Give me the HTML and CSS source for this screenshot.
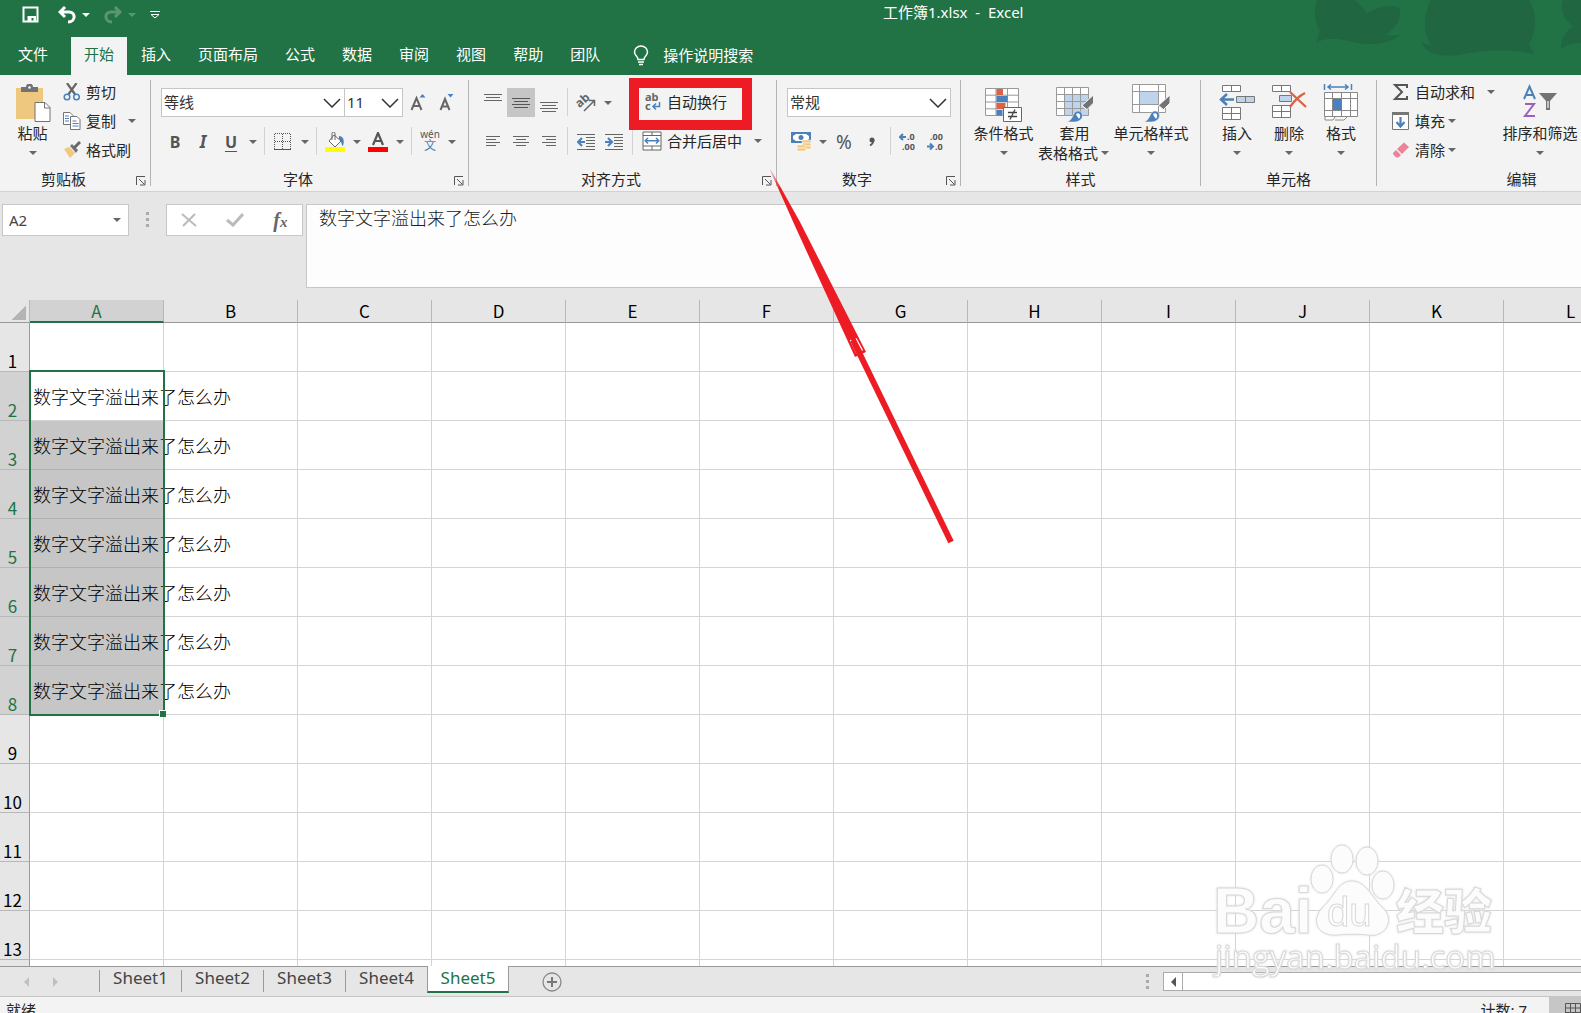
FILE: index.html
```html
<!DOCTYPE html>
<html lang="zh-CN">
<head>
    <meta charset="UTF-8">
    <title>工作簿1.xlsx - Excel</title>
    <meta name="viewport" content="width=device-width, initial-scale=1.0">
    <link rel="stylesheet" href="styles.css">
</head>
<body>
<header class="header">
    <svg class="clouds" width="270" height="75" viewBox="0 0 270 75">
        <path d="M6 0C2 12 4 24 9 30L5 43C16 36 30 39 42 42C58 46 78 44 90 35C84 36 78 36 74 35C86 29 93 14 87 7C78 4 64 8 56 13C52 8 48 4 44 0Z"/>
        <path d="M120 0C112 14 112 34 120 45L110 43C116 54 128 57 148 55C170 51 194 48 223 54L218 45C226 30 226 12 218 0Z"/>
        <path d="M252 0C248 12 254 20 262 26C255 31 250 38 250 49C256 44 262 43 270 43V0Z"/>
    </svg>
    <div class="title-bar">
        <div class="quick">
            <button class="quick-btn" aria-label="保存"><svg width="18" height="18" viewBox="0 0 18 18"><path d="M1.500 1.500h14v14h-14z" fill="none" stroke="#fff" stroke-width="2"/><path d="M3 10h11v5.500H11.500V12H9.500v3.500H5.500V10H3z" fill="#fff"/></svg></button>
            <button class="quick-btn" aria-label="撤消"><svg width="18" height="18" viewBox="0 0 18 18"><path d="M7 1L2 6l5 5M2 6h9c7 0 7 10-1 10" fill="none" stroke="#fff" stroke-width="3"/></svg><span class="caret"></span></button>
            <button class="quick-btn dim" aria-label="恢复"><svg width="18" height="18" viewBox="0 0 18 18"><path d="M11 1l5 5-5 5M16 6H7C0 6 0 16 8 16" fill="none" stroke="#fff" stroke-width="3"/></svg><span class="caret"></span></button>
            <button class="quick-btn" aria-label="自定义快速访问工具栏"><svg width="10" height="8" viewBox="0 0 10 8"><path d="M0 .5h10M1 3.500l4 3.500 4-3.500z" fill="none" stroke="#fff"/></svg></button>
        </div>
        <div class="title">工作簿1.xlsx&nbsp; -&nbsp; Excel</div>
    </div>
    <nav class="tabs">
        <button class="tab file">文件</button>
        <button class="tab active">开始</button>
        <button class="tab">插入</button>
        <button class="tab">页面布局</button>
        <button class="tab">公式</button>
        <button class="tab">数据</button>
        <button class="tab">审阅</button>
        <button class="tab">视图</button>
        <button class="tab">帮助</button>
        <button class="tab">团队</button>
        <button class="tab tell-me"><svg width="16" height="21" viewBox="0 0 16 21"><path d="M5 14.500C5 11 1.500 11 1.500 7a6.500 6 0 0 1 13 0c0 4-3.500 4-3.500 7.500zM5 17h6M6 19.500h4" fill="none" stroke="#fff" stroke-width="1.500"/></svg>操作说明搜索</button>
    </nav>
</header>

<div class="ribbon">
    <section class="group clipboard">
        <div class="group-body">
            <button class="big">
                <svg width="36" height="39" viewBox="0 0 36 39"><path d="M1 4h27v31H1z" fill="#eec87e"/><path d="M6 3h5a3.500 3.500 0 0 1 7 0h5v5H6z" fill="#737373"/><circle cx="14.500" cy="3.500" r="1.200" fill="#fff"/><path d="M20 18.500h10l5 5v14H20z" fill="#fff" stroke="#737373"/><path d="M29.500 18.500v5.500H35" fill="none" stroke="#737373"/></svg>
                <span>粘贴</span><span class="caret"></span>
            </button>
            <div class="list">
                <button class="item"><svg width="18" height="18" viewBox="0 0 18 18"><path d="M4 0l8.500 12M13.500 0L5 12" stroke="#666" stroke-width="2.200"/><g fill="#f3f3f3" stroke="#4a80bb" stroke-width="1.500"><circle cx="4" cy="14" r="2.800"/><circle cx="13.500" cy="14" r="2.800"/></g></svg>剪切</button>
                <button class="item"><svg width="18" height="18" viewBox="0 0 18 18"><g fill="#fff" stroke="#737373"><path d="M.5.500H7l3 3v9H.5z"/><path d="M7.500 4.500H14l3 3v10H7.500z"/></g><path d="M2 4h4M2 6.500h4M2 9h4M9.500 9h4M9.500 11.500h6M9.500 14h6" stroke="#4a80bb"/></svg>复制<span class="caret"></span></button>
                <button class="item"><svg width="18" height="18" viewBox="0 0 18 18"><path d="M1 8l5-2 6 6-5 5z" fill="#eec87e"/><path d="M7 5l2-2 6 6-2 3z" fill="#737373"/><path d="M11 7l6-6" stroke="#666" stroke-width="3"/></svg>格式刷</button>
            </div>
        </div>
        <div class="group-foot"><span class="label">剪贴板</span><button class="launcher" aria-label="剪贴板设置"></button></div>
    </section>

    <section class="group font">
        <div class="group-body rows">
            <div class="row">
                <select class="select font-name" aria-label="字体"><option>等线</option></select>
                <select class="select font-size" aria-label="字号"><option>11</option></select>
                <button class="tool" aria-label="增大字号"><svg width="18" height="20" viewBox="0 0 18 20"><path d="M1.500 17L6.500 5l5 12M3.500 13h6" fill="none" stroke="#666" stroke-width="2"/><path d="M9.500 4.500l3-3.500 3 3.500z" fill="#4a80bb"/></svg></button>
                <button class="tool" aria-label="减小字号"><svg width="18" height="20" viewBox="0 0 18 20"><path d="M2.500 17L7 6l4.500 11M4.500 13.500h5" fill="none" stroke="#666" stroke-width="2"/><path d="M9.500 1l3 3.500 3-3.500z" fill="#4a80bb"/></svg></button>
            </div>
            <div class="row">
                <button class="tool bold">B</button>
                <button class="tool italic">I</button>
                <button class="tool underline">U</button>
                <button class="drop" aria-label="下划线选项"><span class="caret"></span></button>
                <i class="sep"></i>
                <button class="tool" aria-label="边框"><svg width="18" height="18" viewBox="0 0 18 18"><path d="M.5.500v16M16.500 .5v16M8.500 .5v16M.5.500H17M.5 8.500H17" fill="none" stroke="#555" stroke-dasharray="1 1" shape-rendering="crispEdges"/><path d="M0 16.500h17" stroke="#555" stroke-width="1"/></svg></button>
                <button class="drop" aria-label="边框选项"><span class="caret"></span></button>
                <i class="sep"></i>
                <button class="tool" aria-label="填充颜色"><svg width="20" height="20" viewBox="0 0 20 20"><path d="M14 4c4 0 6 4 4 10-2-1-1-5-4-7z" fill="#4a80bb"/><path d="M9 3l7 6-6 6-6-6z" fill="#fff" stroke="#666"/><path d="M7 8V1.500A1.500 1.500 0 0 1 10 1.500V8" fill="none" stroke="#666"/><path d="M0 15h20v5H0z" fill="#ff0"/></svg></button>
                <button class="drop" aria-label="填充选项"><span class="caret"></span></button>
                <button class="tool" aria-label="字体颜色"><svg width="20" height="20" viewBox="0 0 20 20"><path d="M5 13L10 1l5 12M7 9h6.500" fill="none" stroke="#555" stroke-width="2.200"/><path d="M0 15h20v5H0z" fill="red"/></svg></button>
                <button class="drop" aria-label="颜色选项"><span class="caret"></span></button>
                <i class="sep"></i>
                <button class="tool pinyin"><span>wén</span><span class="blue">文</span></button>
                <button class="drop" aria-label="拼音选项"><span class="caret"></span></button>
            </div>
        </div>
        <div class="group-foot"><span class="label">字体</span><button class="launcher" aria-label="字体设置"></button></div>
    </section>

    <section class="group align">
        <div class="group-body rows">
            <div class="row">
                <div class="tools">
                    <button class="tool" aria-label="顶端对齐"><svg width="18" height="20" viewBox="0 0 18 20"><path d="M0 1.500h18M2 4.500h14M0 7.500h18" stroke="#666"/></svg></button>
                    <button class="tool on" aria-label="垂直居中"><svg width="18" height="20" viewBox="0 0 18 20"><path d="M0 5.500h18M2 8.500h14M0 11.500h18M2 14.500h14" stroke="#555"/></svg></button>
                    <button class="tool" aria-label="底端对齐"><svg width="18" height="20" viewBox="0 0 18 20"><path d="M0 9.500h18M2 12.500h14M0 15.500h18M2 18.500h14" stroke="#666"/></svg></button>
                    <i class="sep"></i>
                    <button class="tool" aria-label="方向"><svg width="24" height="24" viewBox="0 0 24 24"><text class="ab slanted" x="2" y="14" transform="rotate(-42 8 11)">ab</text><path d="M10 20L20 10M15 9.500h5.500V15" fill="none" stroke="#666" stroke-width="1.500"/></svg></button>
                    <button class="drop" aria-label="方向选项"><span class="caret"></span></button>
                </div>
                <button class="item"><svg width="20" height="24" viewBox="0 0 20 24"><text class="ab" x="3" y="11">ab</text><text class="ab" x="3" y="20">c</text><path d="M17.500 12v4.500H11M14 13.500l-3 3 3 3" fill="none" stroke="#4a80bb" stroke-width="1.500"/></svg>自动换行</button>
            </div>
            <div class="row">
                <div class="tools">
                    <button class="tool" aria-label="左对齐"><svg width="14" height="14" viewBox="0 0 14 14"><path d="M0 1.500h14M0 4.500h10M0 7.500h14M0 10.500h10" stroke="#666"/></svg></button>
                    <button class="tool" aria-label="居中"><svg width="16" height="14" viewBox="0 0 16 14"><path d="M0 1.500h16M3 4.500h10M0 7.500h16M3 10.500h10" stroke="#666"/></svg></button>
                    <button class="tool" aria-label="右对齐"><svg width="14" height="14" viewBox="0 0 14 14"><path d="M0 1.500h14M4 4.500h10M0 7.500h14M4 10.500h10" stroke="#666"/></svg></button>
                    <i class="sep"></i>
                    <button class="tool" aria-label="减少缩进"><svg width="18" height="18" viewBox="0 0 18 18"><path d="M0 1.500h18M9 4.500h9M9 7.500h9M9 10.500h9M9 13.500h9M0 16.500h18" stroke="#666"/><path d="M8 9H1M5 5L1 9l4 4" fill="none" stroke="#4a80bb" stroke-width="2.200"/></svg></button>
                    <button class="tool" aria-label="增加缩进"><svg width="18" height="18" viewBox="0 0 18 18"><path d="M0 1.500h18M9 4.500h9M9 7.500h9M9 10.500h9M9 13.500h9M0 16.500h18" stroke="#666"/><path d="M0 9h7M3 5l4 4-4 4" fill="none" stroke="#4a80bb" stroke-width="2.200"/></svg></button>
                </div>
                <i class="sep"></i>
                <button class="item merge"><svg width="20" height="20" viewBox="0 0 20 20"><path d="M1 1h18v18H1zM1 4.500h18M1 15h18M10 1v3.500M10 15v4" fill="#fff" stroke="#666"/><path d="M3.500 9.800h13M6 7L3.200 9.800 6 12.500M14 7l2.800 2.800L14 12.500" fill="none" stroke="#4a80bb" stroke-width="1.500"/></svg>合并后居中<span class="caret"></span></button>
            </div>
        </div>
        <div class="group-foot"><span class="label">对齐方式</span><button class="launcher" aria-label="对齐设置"></button></div>
    </section>

    <section class="group number">
        <div class="group-body rows">
            <div class="row">
                <select class="select format" aria-label="数字格式"><option>常规</option></select>
            </div>
            <div class="row">
                <button class="tool" aria-label="会计数字格式"><svg width="20" height="20" viewBox="0 0 20 20"><path d="M0 0h20v11H0z" fill="#4a80bb"/><path d="M2 4l3-2h10l3 2v3l-3 2H5L2 7z" fill="#fff"/><circle cx="10" cy="5.500" r="2.500" fill="#4a80bb"/><g fill="#eec87e" stroke="#fff" stroke-width=".6"><rect x="11" y="8" width="9" height="3" rx="1"/><rect x="11" y="11" width="9" height="3" rx="1"/><rect x="11" y="14" width="9" height="3" rx="1"/><rect x="6" y="13" width="9" height="3" rx="1"/><rect x="6" y="16" width="9" height="3" rx="1"/></g></svg></button>
                <button class="drop" aria-label="货币选项"><span class="caret"></span></button>
                <button class="tool percent">%</button>
                <button class="tool" aria-label="千位分隔样式"><svg width="8" height="12" viewBox="0 0 8 12"><circle cx="4" cy="4" r="2.500" fill="#555"/><path d="M5.500 4c0 3-1 4-3.500 5.500" fill="none" stroke="#555" stroke-width="1.800"/></svg></button>
                <i class="sep"></i>
                <button class="tool" aria-label="增加小数位数"><svg width="20" height="22" viewBox="0 0 20 22"><text class="dec" x="8" y="9">.0</text><text class="dec" x="3" y="19">.00</text><path d="M7 6H1M4 3L1 6l3 3" fill="none" stroke="#4a80bb" stroke-width="2"/></svg></button>
                <button class="tool" aria-label="减少小数位数"><svg width="20" height="22" viewBox="0 0 20 22"><text class="dec" x="3" y="9">.00</text><text class="dec" x="8" y="19">.0</text><path d="M0 15.500h6M3 12.500l3 3-3 3" fill="none" stroke="#4a80bb" stroke-width="2"/></svg></button>
            </div>
        </div>
        <div class="group-foot"><span class="label">数字</span><button class="launcher" aria-label="数字设置"></button></div>
    </section>

    <section class="group style">
        <div class="group-body">
            <button class="big">
                <svg width="38" height="39" viewBox="0 0 38 39"><path d="M.5 4.500h33v27H.5zM11 4.500v27M22.500 4.500v27M.5 11.200h33M.5 18h33M.5 24.800h33" fill="#fff" stroke="#999"/><path d="M11.500 5h6.500v6h-6.500zM11.500 19h9v6h-9z" fill="#db6243"/><path d="M11.500 12h11v6h-11zM11.500 26h6v5.500h-6z" fill="#4a80bb"/><path d="M18.500 23.500h18v14h-18z" fill="#fff" stroke="#666"/><path d="M23 28.500h9M23 32.500h9M30 25.500l-5 10" stroke="#444" stroke-width="1.300"/></svg>
                <span>条件格式</span><span class="caret"></span>
            </button>
            <button class="big">
                <svg width="38" height="39" viewBox="0 0 38 39"><path d="M.5 3.500h32v28H.5z" fill="#fff"/><path d="M9 11h23.500v20.500H9z" fill="#bfd3ea"/><path d="M.5 3.500h32v28H.5zM8.500 3.500v28M16.500 3.500v28M24.500 3.500v28M.5 10.500h32M.5 17.500h32M.5 24.500h32" fill="none" stroke="#999"/><path d="M37.500 11v8L31 25.500l-5-4z" fill="#737373" stroke="#f3f3f3"/><path d="M25.500 21l5 5" stroke="#f3f3f3"/><path d="M10 38c8-1 6-11 12-11 6 0 7 10-3 11z" fill="#4a80bb" stroke="#f3f3f3" stroke-width=".6"/><path d="M20 30c3-2 6 1 3 5-1-2-2-2-3-5z" fill="#fff"/></svg>
                <span>套用</span><span class="line">表格格式<span class="caret"></span></span>
            </button>
            <button class="big cell-style">
                <svg width="38" height="39" viewBox="0 0 38 39"><path d="M.5.500h33v28H.5zM7.500.500v28M26.500.500v28M.5 7.500h33M.5 20.500h33" fill="#fff" stroke="#999"/><path d="M8 8h18v12H8z" fill="#bfd3ea"/><path d="M38 11v8l-6.500 6.500-5-4z" fill="#737373" stroke="#f3f3f3"/><path d="M26 21l5 5" stroke="#f3f3f3"/><path d="M11 38c8-1 6-11 12-11 6 0 7 10-3 11z" fill="#4a80bb" stroke="#f3f3f3" stroke-width=".6"/><path d="M21 30c3-2 6 1 3 5-1-2-2-2-3-5z" fill="#fff"/></svg>
                <span>单元格样式</span><span class="caret"></span>
            </button>
        </div>
        <div class="group-foot"><span class="label">样式</span></div>
    </section>

    <section class="group cells">
        <div class="group-body">
            <button class="big">
                <svg width="36" height="39" viewBox="0 0 36 39"><path d="M3.500 1.500h18v6h-18zM12.500 1.500v6M3.500 23.500h18v12h-18zM12.500 23.500v12M3.500 29.500h18" fill="#fff" stroke="#777"/><path d="M17.500 12.500h18v6h-18zM26.500 12.500v6" fill="#bfd3ea" stroke="#777"/><path d="M15 15.500H2M8 10l-6 5.500L8 21" fill="none" stroke="#4a80bb" stroke-width="2.500"/></svg>
                <span>插入</span><span class="caret"></span>
            </button>
            <button class="big">
                <svg width="36" height="39" viewBox="0 0 36 39"><path d="M1.500 1.500h18v6h-18zM10.500 1.500v6M1.500 21.500h18v12h-18zM10.500 21.500v12M1.500 27.500h18" fill="#fff" stroke="#777"/><path d="M8.500 11.500h12v6h-12z" fill="#bfd3ea" stroke="#777"/><path d="M19 8l16 15M34 9C28 12 23 17 19 23" fill="none" stroke="#db6243" stroke-width="2.300"/></svg>
                <span>删除</span><span class="caret"></span>
            </button>
            <button class="big">
                <svg width="36" height="39" viewBox="0 0 36 39"><path d="M1.500 8.500h33v24h-33zM9.500 8.500v24M18.500 8.500v24M27.500 8.500v24M1.500 14.500h33M1.500 26.500h33M2 33v3h8l2-3M12 36h9l3-3" fill="#fff" stroke="#888"/><path d="M10 15h8.500v11H10z" fill="#4a80bb"/><path d="M1.500 0v6M28.500 0v6M5 3h20M8 .5L5 3l3 2.500M22 .5L25 3l-3 2.500" fill="none" stroke="#4a80bb" stroke-width="1.500"/></svg>
                <span>格式</span><span class="caret"></span>
            </button>
        </div>
        <div class="group-foot"><span class="label">单元格</span></div>
    </section>

    <section class="group edit">
        <div class="group-body">
            <div class="list">
                <button class="item"><svg width="18" height="18" viewBox="0 0 18 18"><path d="M15 5V2H3l7 7-7 7h12v-3" fill="none" stroke="#555" stroke-width="2"/></svg>自动求和<span class="caret"></span></button>
                <button class="item near"><svg width="18" height="18" viewBox="0 0 18 18"><path d="M.5.500h16v17H.5z" fill="#fff" stroke="#777"/><path d="M0 0h17v3H0z" fill="#777"/><path d="M8.500 5v9M4.500 10l4 4.500 4-4.500" fill="none" stroke="#4a80bb" stroke-width="2.200"/></svg>填充<span class="caret"></span></button>
                <button class="item near"><svg width="18" height="18" viewBox="0 0 18 18"><path d="M5 8l7-6.500 5 4.500-7 7z" fill="#e8859b"/><path d="M4 9l5 5-2.500 2.500H4L1 13v-1z" fill="#e8859b"/></svg>清除<span class="caret"></span></button>
            </div>
            <button class="big sort">
                <svg width="36" height="39" viewBox="0 0 36 39"><path d="M2 15L7.500 2.500 13 15M4 11h7.500" fill="none" stroke="#4a80bb" stroke-width="2"/><path d="M3 20h9L3 32h10" fill="none" stroke="#9a60bd" stroke-width="2"/><path d="M17 9h18l-7 8v9h-4v-9z" fill="#737373"/><path d="M26 17v7" stroke="#ddd" stroke-width="1.500"/></svg>
                <span>排序和筛选</span><span class="caret"></span>
            </button>
        </div>
        <div class="group-foot"><span class="label">编辑</span></div>
    </section>
</div>

<div class="formula-bar">
    <div class="name-box"><input type="text" value="A2" aria-label="名称框"><button class="drop" aria-label="名称列表"><span class="caret"></span></button></div>
    <i class="grip"></i>
    <div class="formula-buttons">
        <button aria-label="取消"><svg width="16" height="14" viewBox="0 0 16 14"><path d="M1 1l14 12M14 1L2 13" stroke="#bbb" stroke-width="2"/></svg></button>
        <button aria-label="输入"><svg width="18" height="14" viewBox="0 0 18 14"><path d="M1 7l6 5L17 1" fill="none" stroke="#bbb" stroke-width="3"/></svg></button>
        <button class="fx" aria-label="插入函数">f<small>x</small></button>
    </div>
    <textarea class="formula" aria-label="编辑栏">数字文字溢出来了怎么办</textarea>
</div>

<main class="sheet">
    <table class="grid">
        <thead><tr id="cols"><th class="corner"></th></tr></thead>
        <tbody id="rows"></tbody>
    </table>
</main>

<footer>
    <div class="sheet-bar">
        <div class="arrows">
            <button class="arrow left" aria-label="上一个"></button>
            <button class="arrow right" aria-label="下一个"></button>
        </div>
        <button class="sheet-tab">Sheet1</button>
        <button class="sheet-tab">Sheet2</button>
        <button class="sheet-tab">Sheet3</button>
        <button class="sheet-tab">Sheet4</button>
        <button class="sheet-tab active">Sheet5</button>
        <button class="add" aria-label="新工作表"><svg width="20" height="20" viewBox="0 0 20 20"><circle cx="10" cy="10" r="9" fill="none" stroke="#888" stroke-width="1.300"/><path d="M10 5v10M5 10h10" stroke="#777" stroke-width="2"/></svg></button>
        <div class="scroll">
            <i class="grip"></i>
            <button class="scroll-btn" aria-label="向左滚动"><i class="arrow left dark"></i></button>
            <div class="track"></div>
        </div>
    </div>
    <div class="status">
        <span>就绪</span>
        <span class="count">计数: 7</span>
        <button class="view" aria-label="普通视图"><svg width="16" height="14" viewBox="0 0 16 14"><path d="M.5.500h15v13H.5zM5.500.500v13M10.500.500v13M.5 5h15M.5 9.500h15" fill="none" stroke="#555"/></svg></button>
    </div>
</footer>

<svg class="marks" width="960" height="560" viewBox="0 0 960 560">
    <defs><linearGradient id="fade" x1="0" y1="0" x2="0" y2="1"><stop offset="0" stop-color="#ed1c24" stop-opacity=".2"/><stop offset=".1" stop-color="#ed1c24"/></linearGradient></defs>
    <rect x="634" y="83" width="113" height="42" fill="none" stroke="#ed1c24" stroke-width="10"/>
    <path d="M770 170H771L800 222L866 352L855 357L795 226Z" fill="url(#fade)"/>
    <path d="M850.500 340l6.500 13.500M856 338.500l6.500 12" stroke="#fff" stroke-width="1.500"/>
    <path d="M853 340L951 542" stroke="#ed1c24" stroke-width="6"/>
</svg>

<svg class="watermark" width="300" height="150" viewBox="0 0 300 150">
    <g class="wm">
        <text class="wm-bai" x="4" y="92">Bai</text>
        <ellipse cx="113" cy="38" rx="11" ry="14"/>
        <ellipse cx="133" cy="18" rx="11" ry="14"/>
        <ellipse cx="158" cy="20" rx="11" ry="14"/>
        <ellipse cx="174" cy="44" rx="11" ry="14"/>
        <path d="M143 40c-14 0-18 16-28 25-16 16-4 31 14 29 8-1 22-1 30 0 16 3 28-14 15-27-11-10-17-27-31-27z"/>
        <text class="wm-du" x="118" y="85">du</text>
        <text class="wm-cn" x="187" y="88">经验</text>
        <text class="wm-url" x="6" y="128">jingyan.baidu.com</text>
    </g>
</svg>

<script>
    const cols = "ABCDEFGHIJKL".split("");
    const text = "数字文字溢出来了怎么办";
    const lastRow = 13;
    const head = document.getElementById("cols");
    const body = document.getElementById("rows");

    cols.forEach(function (c) {
        const th = document.createElement("th");
        th.textContent = c;
        if (c === "A") th.className = "picked";
        head.appendChild(th);
    });

    // one spare row fills the strip above the sheet tabs
    for (let r = 1; r <= lastRow + 1; r++) {
        const tr = document.createElement("tr");
        const selected = r >= 2 && r <= 8;
        const th = document.createElement("th");
        if (r <= lastRow) th.textContent = r;
        if (selected) th.className = "picked";
        tr.appendChild(th);
        cols.forEach(function (c) {
            const td = document.createElement("td");
            if (c === "A" && selected) {
                td.textContent = text;
                td.className = r === 2 ? "current" : "selected";
            }
            tr.appendChild(td);
        });
        body.appendChild(tr);
    }

    const box = document.createElement("div");
    box.className = "selection";
    document.querySelector(".current").appendChild(box);
</script>
</body>
</html>
```
FILE: styles.css
```css
* { box-sizing: border-box; }
body { margin: 0; height: 100vh; display: flex; flex-direction: column; overflow: hidden; position: relative; background: #e6e6e6; color: #262626; font: 15px/20px "Noto Sans", "Noto Sans CJK SC", sans-serif; }
button { border: 0; padding: 0; background: none; color: inherit; font: inherit; white-space: nowrap; }
svg { display: block; flex: none; }
.caret { flex: none; width: 0; height: 0; border: 4px solid transparent; border-top-color: #666; border-bottom: 0; }

/* header */
.header { position: relative; background: #217346; color: #fff; }
.clouds { position: absolute; top: 0; right: 0; fill: #1f6641; }
.title-bar { display: flex; height: 37px; position: relative; }
.quick { flex: 0 0 883px; display: flex; align-items: center; gap: 14px; padding: 0 0 8px 22px; }
.quick-btn { display: flex; align-items: center; gap: 6px; }
.quick-btn:first-child { margin-right: 4px; }
.quick-btn .caret { border-top-color: #fff; }
.dim { opacity: .25; }
.title { line-height: 24px; white-space: nowrap; }
.tabs { display: flex; gap: 1px; height: 38px; position: relative; }
.tab { padding: 0 13px 4px; }
.tab.file { padding: 0 22px 4px 18px; }
.tab.active { background: #f3f3f3; color: #217346; }
.tell-me { display: flex; align-items: center; gap: 14px; padding: 0 0 2px 19px; }

/* ribbon */
.ribbon { display: flex; height: 117px; flex: none; padding: 5px 0; background: #f3f3f3; border-bottom: 1px solid #d2d2d2; overflow: hidden; }
.group { flex: none; display: flex; flex-direction: column; border-right: 1px solid #b4b4b4; }
.clipboard { width: 151px; }
.font { width: 318px; }
.align { width: 308px; }
.number { width: 184px; }
.style { width: 240px; }
.cells { width: 176px; }
.edit { width: 290px; }
.group-body { flex: 1; display: flex; }
.group-foot { display: flex; height: 16px; line-height: 18px; }
.label { flex: 1; text-align: center; }
.launcher { width: 23px; background: url("data:image/svg+xml,%3Csvg xmlns='http://www.w3.org/2000/svg' width='10' height='10'%3E%3Cpath d='M.5 9V.5H9M3 3l5 5M9 4v5H4' fill='none' stroke='%23555'/%3E%3C/svg%3E") no-repeat 9px 6px; }
.big { width: 52px; display: flex; flex-direction: column; align-items: center; padding-top: 4px; }
.big span { line-height: 20px; }
.big > .caret { margin-top: 8px; }
.big .line { display: flex; align-items: center; gap: 3px; margin-right: 2px; }
.clipboard .big { width: 60px; padding-left: 5px; }
.list { display: flex; flex-direction: column; padding-left: 3px; margin-top: -3px; }
.item { display: flex; align-items: center; gap: 5px; height: 29px; }
.item .caret { margin-left: 7px; }
.item.near .caret { margin-left: -2px; }
.rows { flex-direction: column; padding: 8px 10px 0; gap: 9px; }
.row { display: flex; height: 30px; }
.row .item { height: 28px; }
.tools { display: flex; width: 149px; }
.tool { width: 28px; height: 29px; display: flex; align-items: center; justify-content: center; color: #555; }
.tool.on { background: #c6c6c6; }
.drop { width: 15px; display: flex; align-items: center; justify-content: center; }
.sep { width: 1px; height: 28px; margin: 0 4px; background: #d2d2d2; }
.bold { font-weight: 700; font-size: 16px; }
.italic { font: italic 700 17px "Noto Sans", serif; }
.underline { font-weight: 700; font-size: 16px; text-decoration: underline; text-underline-offset: 3px; }
.percent { font-size: 19px; }
.pinyin { flex-direction: column; font-size: 10px; line-height: 8px; }
.pinyin .blue { color: #4a80bb; font-size: 12px; line-height: 16px; }
.ab { font: 700 11px "Noto Sans", sans-serif; fill: #666; }
.slanted { font-size: 12px; }
.dec { font: 700 9px "Noto Sans", sans-serif; fill: #555; }
.select { appearance: none; flex: none; height: 29px; border: 1px solid #c6c6c6; border-radius: 0; padding: 0 2px 2px; color: #333; font: inherit; background: #fff url("data:image/svg+xml,%3Csvg xmlns='http://www.w3.org/2000/svg' width='18' height='10'%3E%3Cpath d='M1 1l8 8 8-8' fill='none' stroke='%23333' stroke-width='1.500'/%3E%3C/svg%3E") no-repeat right 3px center; }
.font .rows { padding-right: 0; }
.font-name { width: 184px; }
.font-size { width: 59px; margin-left: -1px; }
.font-size + .tool { margin-left: 2px; }
.number .rows { padding-right: 9px; }
.format { width: 100%; }
.align .item { padding-left: 14px; }
.align .item.merge { padding-left: 5px; }
.style .group-body { padding-left: 7px; }
.style .big { width: 71px; }
.style .cell-style { width: 82px; }
.cells .group-body { padding-left: 10px; }
.edit .list { padding-left: 15px; width: 123px; }
.big.sort { width: 80px; }

/* formula bar */
.formula-bar { flex: none; display: flex; align-items: flex-start; padding: 12px 0 12px 2px; }
.name-box { display: flex; width: 127px; height: 32px; background: #fff; border: 1px solid #c6c6c6; }
.name-box input { flex: 1; min-width: 0; border: 0; padding: 0 6px; background: none; font: inherit; color: #444; }
.name-box .drop { width: 22px; }
.grip { width: 3px; height: 15px; margin: 8px 17px; background: repeating-linear-gradient(#aaa 0 3px, transparent 3px 6px); }
.formula-buttons { display: flex; justify-content: space-around; align-items: center; width: 137px; height: 32px; background: #fff; border: 1px solid #c6c6c6; }
.fx { font: italic 700 20px "Liberation Serif", serif; color: #666; }
.fx small { font-size: 15px; }
.formula { flex: 1; height: 84px; margin-left: 3px; padding: 0 12px; border: 1px solid #c6c6c6; border-right: 0; resize: none; background: #fdfdfd; color: #222; font: 300 18px/24px "Noto Sans CJK SC", sans-serif; }

/* cells */
.sheet { flex: 1; min-height: 0; overflow: hidden; background: #fff; border-bottom: 1px solid #999; }
.grid { table-layout: fixed; width: 1638px; border-collapse: separate; border-spacing: 0; font: 300 18px/24px "Noto Sans CJK SC", sans-serif; color: #000; }
.grid th { font: 400 17px/22px "Noto Sans CJK SC", sans-serif; padding: 0; background: #e6e6e6; }
.grid thead th { height: 23px; width: 134px; border-right: 1px solid #b8b8b8; border-bottom: 1px solid #999; }
.grid thead .corner { width: 30px; background: linear-gradient(135deg, #e6e6e6 50%, #b4b4b4 50%) no-repeat 11px 5px / 15px 15px #e6e6e6; }
.grid tbody th { height: 49px; line-height: 20px; padding-right: 4px; vertical-align: bottom; border-right: 1px solid #999; border-bottom: 1px solid #b8b8b8; }
.grid .picked { background: #d2d2d2; color: #217346; }
.grid thead .picked { line-height: 21px; border-bottom: 2px solid #217346; }
.grid td { padding: 0 0 0 3px; border-right: 1px solid #d4d4d4; border-bottom: 1px solid #d4d4d4; white-space: nowrap; }
.grid .current { position: relative; }
.grid .selected { background: #c6c6c6; border-bottom-color: #b0b0b0; }
.selection { position: absolute; top: -2px; left: -1px; width: 136px; height: 346px; border: 2px solid #217346; }
.selection::after { content: ""; position: absolute; right: -3px; bottom: -3px; width: 6px; height: 6px; background: #217346; border-top: 1px solid #fff; border-left: 1px solid #fff; }

/* sheet tabs */
.sheet-bar { display: flex; height: 29px; }
.arrows { display: flex; align-items: center; gap: 24px; width: 99px; padding-left: 24px; }
.arrow { width: 0; height: 0; border: 5px solid transparent; }
.arrow.left { border-left: 0; border-right-color: #c0c0c0; }
.arrow.right { border-right: 0; border-left-color: #c0c0c0; }
.arrow.dark { border-right-color: #555; }
.sheet-tab { width: 82px; height: 22px; margin-top: 3px; padding: 0 0 6px; border-left: 1px solid #999; color: #444; font-size: 17px; line-height: 16px; }
.sheet-tab.active { height: 27px; margin-top: -1px; padding: 0 0 2px; background: #fff; color: #217346; border-right: 1px solid #999; border-bottom: 2px solid #217346; }
.add { margin-left: 33px; }
.scroll { margin-left: auto; display: flex; width: 435px; }
.scroll .grip { flex: none; margin: 7px 14px 0 0; }
.scroll-btn { width: 20px; height: 19px; margin-top: 5px; display: flex; align-items: center; justify-content: center; background: #fff; border: 1px solid #ababab; }
.track { flex: 1; height: 19px; margin-top: 5px; background: #fff; border: 1px solid #ababab; border-right: 0; border-left: 0; }
.status { display: flex; height: 17px; overflow: hidden; padding: 3px 0 0 6px; line-height: 20px; background: #f3f3f3; border-top: 1px solid #c6c6c6; }
.count { margin-left: auto; margin-right: 22px; }
.view { width: 32px; height: 20px; margin-top: -3px; padding: 5px 0 0 16px; background: #c6c6c6; }

/* drawn over the window */
.marks, .watermark { position: absolute; pointer-events: none; }
.marks { top: 0; left: 0; }
.watermark { right: 72px; bottom: 22px; }
.wm { fill: #fff; fill-opacity: .9; stroke: #d8d8d8; stroke-width: 1; filter: drop-shadow(0 0 1px #ddd); }
.wm-bai { font: 700 64px "Liberation Sans", sans-serif; }
.wm-du { font: 400 40px "Liberation Sans", sans-serif; }
.wm-cn { font: 900 48px "Noto Sans CJK SC", sans-serif; }
.wm-url { font: 400 33px "Open Sans", sans-serif; }
```
